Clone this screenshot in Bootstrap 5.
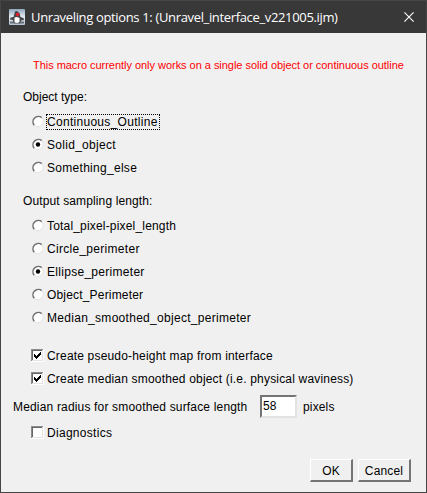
<!DOCTYPE html>
<html lang="en">
<head>
<meta charset="utf-8">
<meta name="viewport" content="width=device-width, initial-scale=1">
<title>Unraveling options</title>
<link href="https://cdn.jsdelivr.net/npm/bootstrap@5.3.0/dist/css/bootstrap.min.css" rel="stylesheet">
<style>
body{font:12px/15px "Liberation Sans",Arial,sans-serif;color:#000;background:#f0f0f0;overflow:hidden}
.dialog-window{width:427px;height:493px;border:1px solid #454545;background:#f0f0f0;white-space:nowrap}
.title-strip{height:32px;background:#383838;color:#fff;font:13px/20px "Open Sans","Noto Sans",sans-serif;padding:0 12px 0 8px}
.title-text{margin-left:6px;letter-spacing:-.345px}
.notice{height:24px;margin-top:20px;padding-left:32px;color:#f00;font-size:11px;letter-spacing:-.035px}
.group-label{height:25px;padding-left:22px}
.second{margin-top:10px;letter-spacing:.12px}
.opt{height:23px;padding-left:30px;cursor:default;letter-spacing:.29px}
.tight{letter-spacing:.18px}
.checks-start{margin-top:15px}
.opt input{position:absolute;opacity:0;width:0;height:0}
.opt svg{width:13px;height:13px;flex:none}
.opt span{margin-left:2px;padding:1px 0 0;border:1px solid transparent;line-height:13px}
.opt .focused{border:1px dotted #000;padding-right:1px}
.radius-row{margin-top:5px;padding-left:12px}
.radius-row span{padding-top:2px}
.radius-label{width:247px;letter-spacing:.17px}
.unit{margin-left:6px;letter-spacing:.15px}
.last-check{margin-top:3px}
.num{width:37px;height:23px;border:2px solid;border-color:#747474 #e3e3e3 #e3e3e3 #747474;background:#fff;padding:0 0 2px 1px;font:inherit;outline:0;border-radius:0}
.actions{gap:5px;margin-top:15px;padding-right:15px}
.push{height:23px;border:2px solid;border-color:#fff #747474 #747474 #fff;border-width:1px 2px 2px 1px;background:#f0f0f0;border-radius:0;padding:2px 0 0;font:inherit;color:#000;letter-spacing:.15px}
.push-ok{width:43px}.push-cancel{width:53px}
</style>
</head>
<body>
<svg class="d-none" xmlns="http://www.w3.org/2000/svg">
<symbol id="ring" viewBox="0 0 13 13"><circle cx="7" cy="6.500" r="5" fill="#fff"/><path d="M3.200 10.300A5.400 5.400 0 0 1 10.800 2.700" fill="none" stroke="#6f6f6f" stroke-width="1.500"/><path d="M10.800 2.700A5.400 5.400 0 0 1 3.200 10.300" fill="none" stroke="#e3e3e3" stroke-width="1"/></symbol>
<symbol id="box" viewBox="0 0 13 13"><path d="M0 0h13v13H0z" fill="#fff"/><path d="M0 0h12v1H1v11H0z" fill="#8c8c8c"/><path d="M1 1h10v1H2v9H1z" fill="#686868"/><path d="M11 1h1v11H1v-1h10z" fill="#e3e3e3"/></symbol>
<symbol id="tick" viewBox="0 0 13 13"><path d="M3 5h1v1h1v1h1V6h1V5h1V4h1V3h1v3H9v1H8v1H7v1H6v1H5V9H4V8H3z" fill="#000"/></symbol>
</svg>
<main class="dialog-window d-flex flex-column">
<header class="title-strip d-flex align-items-center">
<svg width="16" height="16" viewBox="0 0 16 16"><defs><linearGradient id="g" x2="0" y2="1"><stop stop-color="#8fa6bd"/><stop offset=".5" stop-color="#e6edf3"/><stop offset="1" stop-color="#b4c3d0"/></linearGradient></defs><rect width="16" height="16" rx="1" fill="url(#g)"/><path d="M6 2.500L8 2l2.500 2 1 4 3 1 .5 2-3 .5V14l-1 .5H5l-1-1V11l-3-.5.5-2L4.500 8z" fill="#454649"/><path d="M5.500 8.500L8 8l2.500 1v4l-2 1-3-.5z" fill="#fff"/><path d="M1 12.500h4l1 2H1zM11 12.500h4v2h-4.500z" fill="#66717b"/><circle cx="8.600" cy="5.600" r="1.800" fill="#e32029"/></svg>
<span class="title-text">Unraveling options 1: (Unravel_interface_v221005.ijm)</span>
<svg class="ms-auto" width="10" height="10" viewBox="0 0 10 10"><path d="M.4.400l9.200 9.200M9.600.400L.4 9.600" stroke="#fff" stroke-width="1.100"/></svg>
</header>
<div class="notice d-flex align-items-center"><span>This macro currently only works on a single solid object or continuous outline</span></div>
<form>
<div class="group-label d-flex align-items-center mt-2"><span>Object type:</span></div>
<label class="opt d-flex align-items-center"><input type="radio" name="a"><svg><use href="#ring"/></svg><span class="focused">Continuous_Outline</span></label>
<label class="opt d-flex align-items-center"><input type="radio" name="a" checked><svg><use href="#ring"/><circle cx="7" cy="6.500" r="2.200"/></svg><span>Solid_object</span></label>
<label class="opt d-flex align-items-center"><input type="radio" name="a"><svg><use href="#ring"/></svg><span>Something_else</span></label>
<div class="group-label second d-flex align-items-center"><span>Output sampling length:</span></div>
<label class="opt tight d-flex align-items-center"><input type="radio" name="b"><svg><use href="#ring"/></svg><span>Total_pixel-pixel_length</span></label>
<label class="opt d-flex align-items-center"><input type="radio" name="b"><svg><use href="#ring"/></svg><span>Circle_perimeter</span></label>
<label class="opt d-flex align-items-center"><input type="radio" name="b" checked><svg><use href="#ring"/><circle cx="7" cy="6.500" r="2.200"/></svg><span>Ellipse_perimeter</span></label>
<label class="opt tight d-flex align-items-center"><input type="radio" name="b"><svg><use href="#ring"/></svg><span>Object_Perimeter</span></label>
<label class="opt d-flex align-items-center"><input type="radio" name="b"><svg><use href="#ring"/></svg><span>Median_smoothed_object_perimeter</span></label>
<label class="opt tight checks-start d-flex align-items-center"><input type="checkbox" checked><svg><use href="#box"/><use href="#tick"/></svg><span>Create pseudo-height map from interface</span></label>
<label class="opt tight d-flex align-items-center"><input type="checkbox" checked><svg><use href="#box"/><use href="#tick"/></svg><span>Create median smoothed object (i.e. physical waviness)</span></label>
<div class="radius-row d-flex align-items-center"><span class="radius-label">Median radius for smoothed surface length</span><input class="num" value="58"><span class="unit">pixels</span></div>
<label class="opt last-check d-flex align-items-center"><input type="checkbox"><svg><use href="#box"/></svg><span>Diagnostics</span></label>
<div class="actions d-flex justify-content-end"><button type="button" class="push push-ok">OK</button><button type="button" class="push push-cancel">Cancel</button></div>
</form>
</main>
</body>
</html>
